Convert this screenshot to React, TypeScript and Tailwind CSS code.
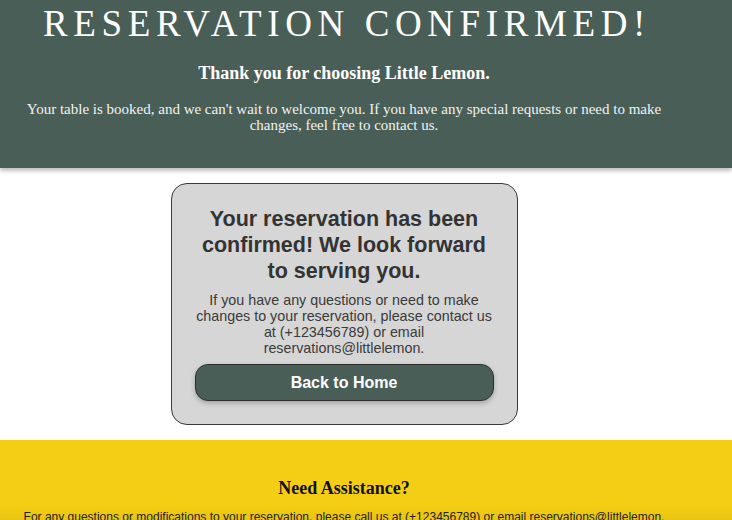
export default function App() {
  return (
    <div className="w-[732px] h-[520px] overflow-hidden bg-white font-['Liberation_Sans',Arial,sans-serif]">
      {/* Header */}
      <header className="relative z-10 h-[168px] bg-[#495e57] pr-[44px] text-white shadow-[0_3px_4px_rgba(0,0,0,0.25)]">
        <h1 className="pt-[3px] pl-[6px] text-center font-['Liberation_Serif',serif] text-[37px] leading-[42px] tracking-[5.6px] text-white">
          RESERVATION CONFIRMED!
        </h1>
        <p className="mt-[17px] text-center font-['Liberation_Serif',serif] text-[18px] font-bold leading-[22px]">
          Thank you for choosing Little Lemon.
        </p>
        <p className="mx-auto mt-[17px] w-[645px] text-center font-['Liberation_Serif',serif] text-[15px] leading-[16px] text-[#f2f2f2]">
          Your table is booked, and we can't wait to welcome you. If you have any special requests or need to make changes, feel free to contact us.
        </p>
      </header>

      {/* Card */}
      <main className="flex justify-center pr-[44px] pt-[15px] pb-[15px]">
        <div className="w-[347px] rounded-[16px] border border-[#3a3a3a] bg-[#d6d6d6] px-[23px] pt-[22px] pb-[23px] text-center text-[#333]">
          <h2 className="text-[21.5px] font-bold leading-[26px]">
            Your reservation has been confirmed! We look forward to serving you.
          </h2>
          <p className="mt-[8px] text-[14.3px] leading-[16px] text-[#3a3a3a]">
            If you have any questions or need to make changes to your reservation, please contact us at (+123456789) or email reservations@littlelemon.
          </p>
          <button className="mt-[8px] h-[37px] w-full rounded-[13px] border border-[#2f2f2f] bg-[#495e57] text-[16px] font-bold text-white shadow-[0_2px_5px_rgba(0,0,0,0.25)]">
            Back to Home
          </button>
        </div>
      </main>

      {/* Footer */}
      <footer className="h-[80px] bg-[linear-gradient(to_bottom,#f4ce14_0%,#f4ce14_80%,#e9c412_100%)] pr-[44px] pt-[37px]">
        <h3 className="text-center font-['Liberation_Serif',serif] text-[18px] font-bold leading-[22px] text-[#111]">
          Need Assistance?
        </h3>
        <p className="mt-[11px] px-[10px] text-center text-[12px] leading-[14px] text-[#222]">
          For any questions or modifications to your reservation, please call us at (+123456789) or email reservations@littlelemon.
        </p>
      </footer>
    </div>
  );
}
